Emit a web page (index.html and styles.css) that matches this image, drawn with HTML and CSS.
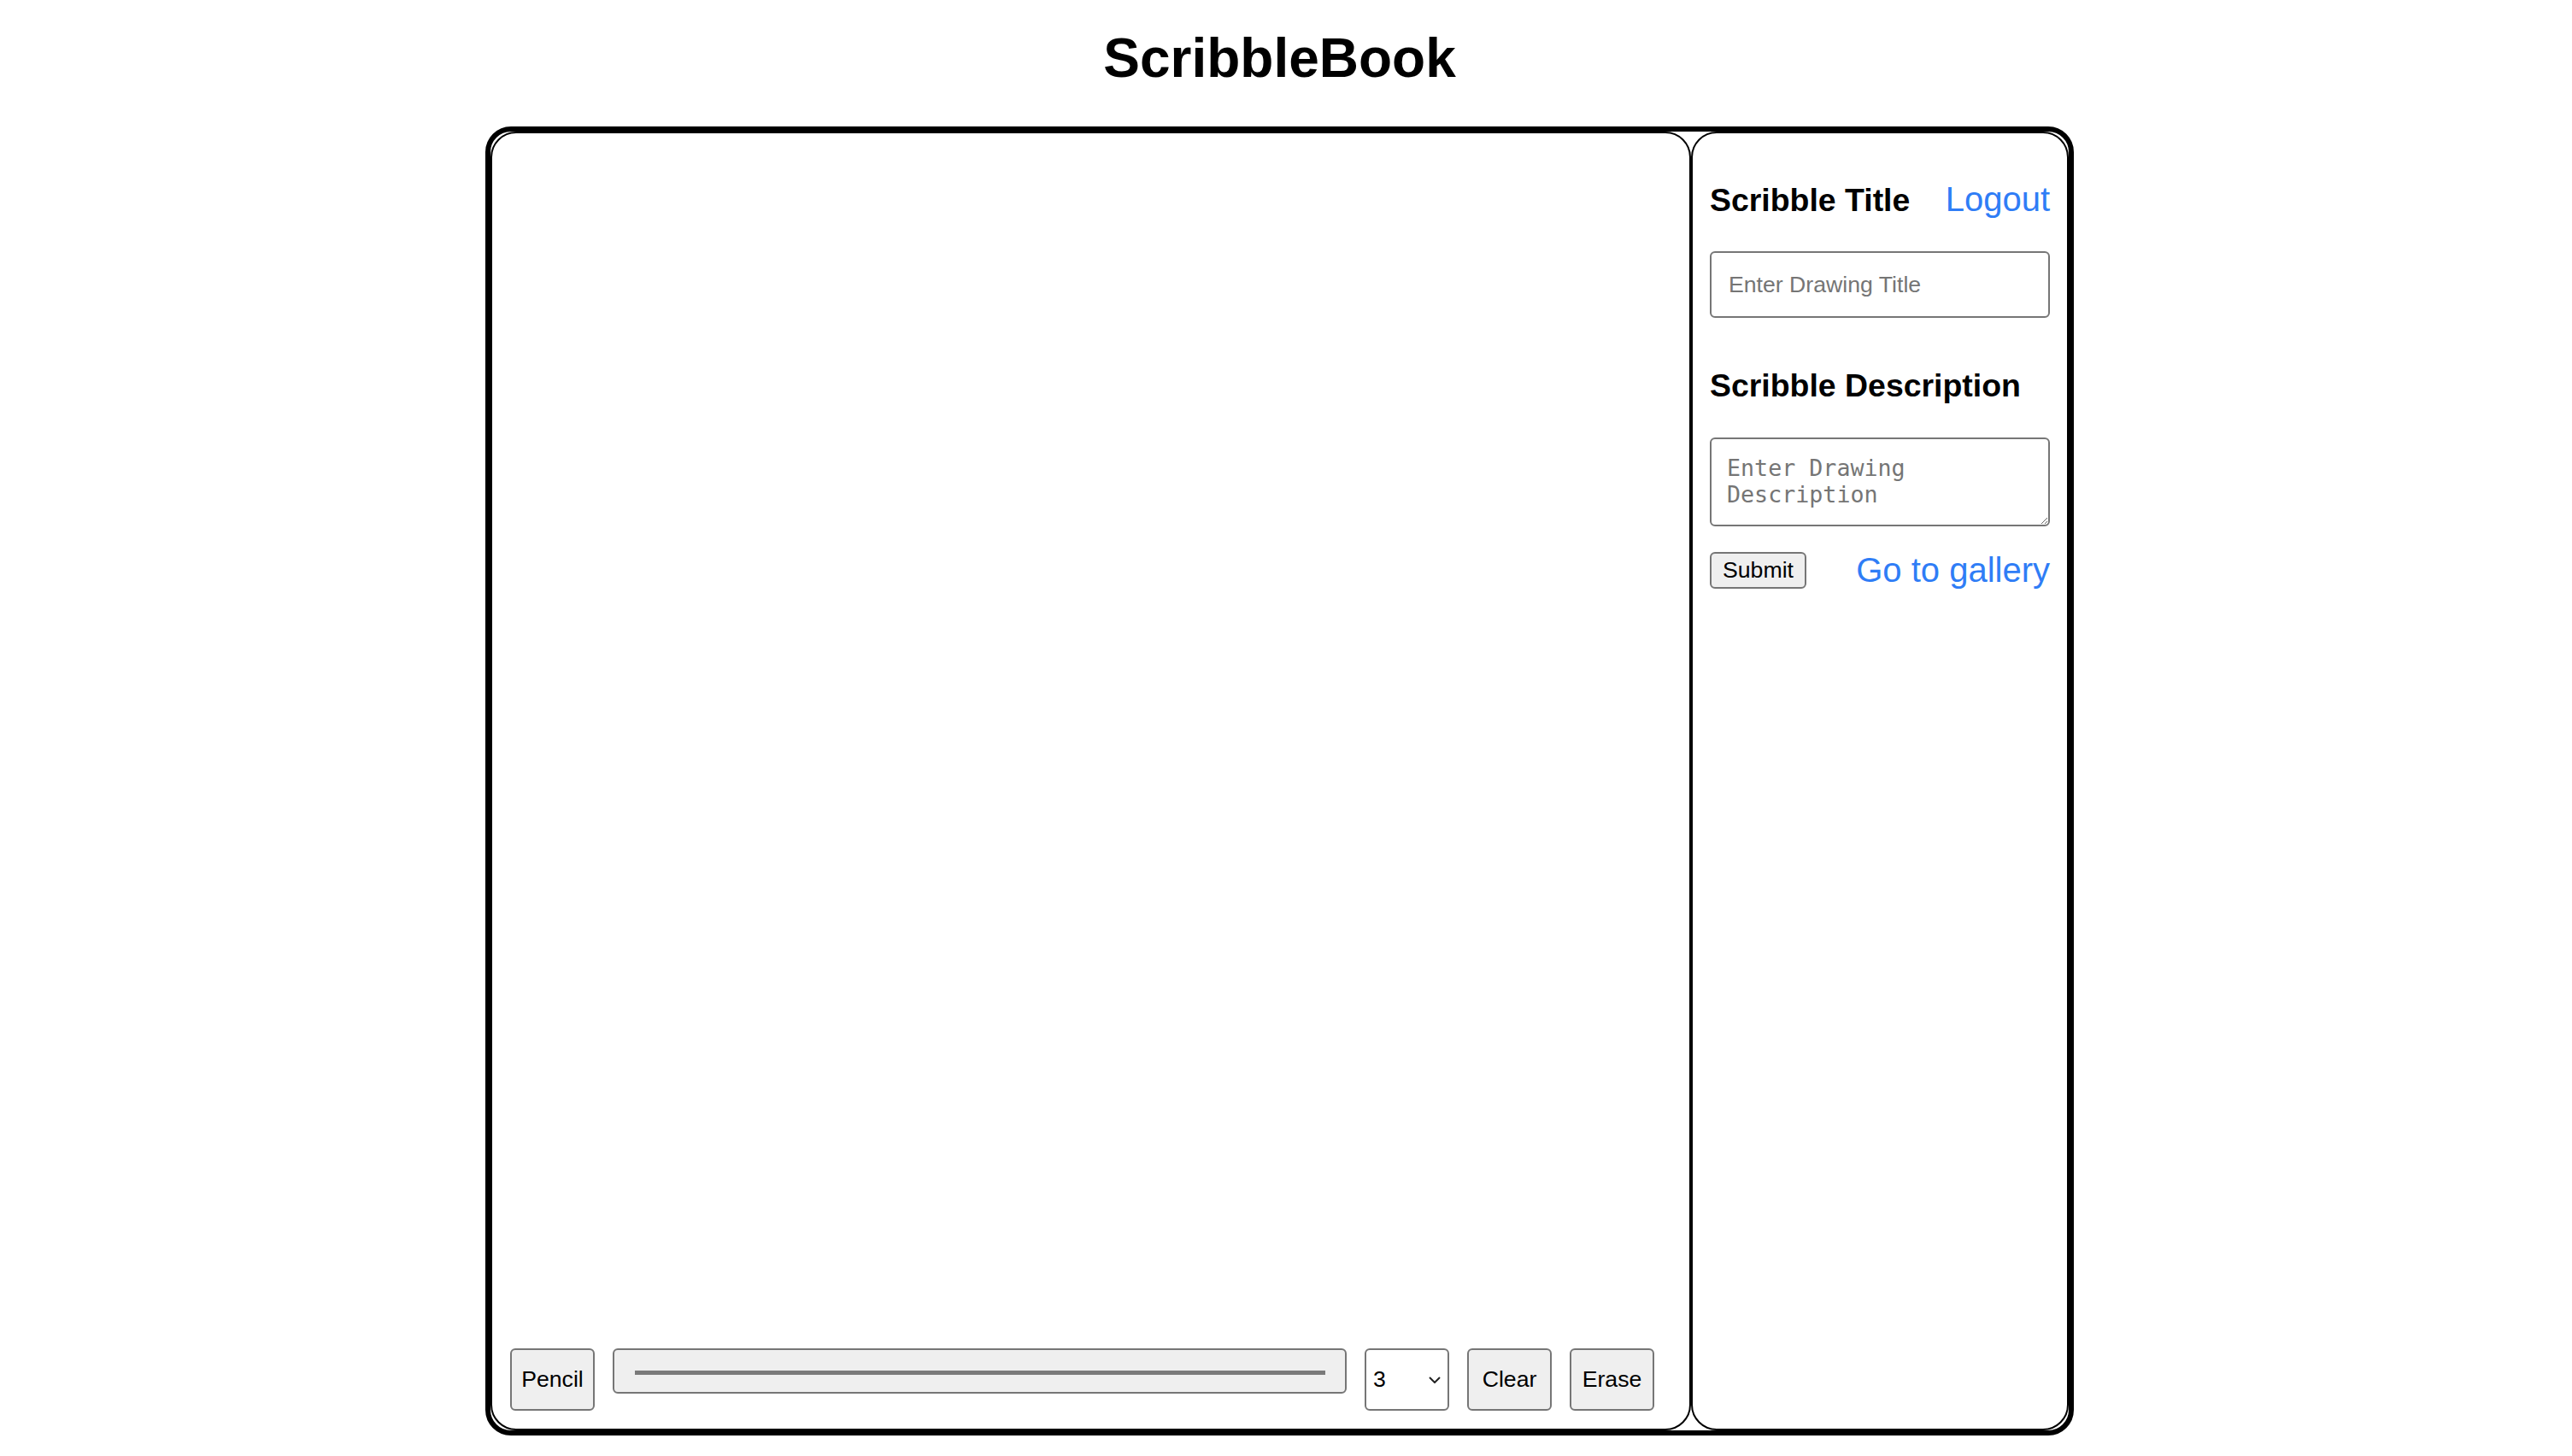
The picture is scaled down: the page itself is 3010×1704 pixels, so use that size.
FILE: index.html
```html
<!DOCTYPE html>
<html lang="en">
<head>
<meta charset="utf-8">
<title>ScribbleBook</title>
<link rel="stylesheet" href="styles.css">
</head>
<body>
<div class="page">
  <h1 class="app-title">ScribbleBook</h1>
  <div class="board">
    <div class="canvas-area">
      <div class="toolbar">
        <button class="btn">Pencil</button>
        <div class="slider"><div class="slider-track"></div></div>
        <div class="size-select">
          <span>3</span>
          <svg class="chevron" width="14" height="8" viewBox="0 0 14 8"><path d="M1 1 L7 7 L13 1" fill="none" stroke="#222" stroke-width="2"/></svg>
        </div>
        <button class="btn">Clear</button>
        <button class="btn">Erase</button>
      </div>
    </div>
    <div class="sidebar">
      <div class="field-head">
        <h3 class="field-label">Scribble Title</h3>
        <a class="link" href="#">Logout</a>
      </div>
      <input class="title-input" type="text" placeholder="Enter Drawing Title">
      <h3 class="field-label desc-label">Scribble Description</h3>
      <textarea class="desc-input" placeholder="Enter Drawing Description"></textarea>
      <div class="actions">
        <button class="submit-btn">Submit</button>
        <a class="link gallery-link" href="#">Go to gallery</a>
      </div>
    </div>
  </div>
</div>
</body>
</html>
```
FILE: styles.css
```css
* { box-sizing: border-box; }
html, body { margin: 0; background: #fff; }
body { font-family: "Liberation Sans", Arial, sans-serif; color: #000; }

.page {
  padding-right: 15px;
  display: flex;
  flex-direction: column;
  align-items: center;
}

.app-title {
  font-size: 64px;
  font-weight: 700;
  line-height: 74px;
  margin: 31px 0 43px;
}

.board {
  width: 1859px;
  height: 1532px;
  border: 6px solid #000;
  border-radius: 30px;
  display: flex;
}

.canvas-area {
  width: 1405px;
  border: 2px solid #000;
  border-radius: 30px;
  display: flex;
  flex-direction: column;
  justify-content: flex-end;
}

.toolbar {
  display: flex;
  align-items: flex-start;
  gap: 21px;
  padding: 0 41px 21px 21px;
}

.btn {
  width: 99px;
  height: 73px;
  font-family: "Liberation Sans", Arial, sans-serif;
  font-size: 26.67px;
  color: #000;
  background: #efefef;
  border: 2px solid #767676;
  border-radius: 6px;
  padding: 0;
  display: flex;
  align-items: center;
  justify-content: center;
}

.slider {
  flex: 1;
  height: 53px;
  background: #efefef;
  border: 2px solid #767676;
  border-radius: 6px;
  display: flex;
  align-items: center;
  padding: 0 23px 0 24px;
}

.slider-track {
  flex: 1;
  height: 5px;
  margin-top: 3px;
  background: #7a7a7a;
}

.size-select {
  width: 99px;
  height: 73px;
  background: #fff;
  border: 2px solid #767676;
  border-radius: 6px;
  display: flex;
  align-items: center;
  justify-content: space-between;
  padding: 0 8px 0 8px;
  font-size: 26.67px;
}

.chevron { display: block; }

.sidebar {
  width: 442px;
  border: 2px solid #000;
  border-radius: 30px;
  padding: 55px 20px 20px;
  display: flex;
  flex-direction: column;
}

.field-head {
  display: flex;
  justify-content: space-between;
  align-items: baseline;
}

.field-label {
  font-size: 37.44px;
  font-weight: 700;
  line-height: 44px;
  margin: 0;
}

.link {
  font-size: 40px;
  line-height: 44px;
  color: #2f7df6;
  text-decoration: none;
}

.title-input {
  margin-top: 38px;
  width: 100%;
  height: 78px;
  border: 2px solid #767676;
  border-radius: 6px;
  padding: 0 20px;
  font-family: "Liberation Sans", Arial, sans-serif;
  font-size: 26.67px;
  outline: none;
}

.title-input::placeholder { color: #757575; }

.desc-label { margin-top: 57px; }

.desc-input {
  margin-top: 39px;
  width: 100%;
  height: 104px;
  border: 2px solid #767676;
  border-radius: 6px;
  padding: 18px;
  font-family: "DejaVu Sans Mono", monospace;
  font-size: 26.67px;
  line-height: 31px;
  outline: none;
  display: block;
}

.desc-input::placeholder { color: #757575; }

.actions {
  margin-top: 26px;
  display: flex;
  justify-content: space-between;
  align-items: flex-start;
}

.gallery-link { margin-top: 3px; }

.submit-btn {
  margin-top: 4px;
  width: 113px;
  height: 43px;
  font-family: "Liberation Sans", Arial, sans-serif;
  font-size: 26.67px;
  color: #000;
  background: #efefef;
  border: 2px solid #767676;
  border-radius: 6px;
  padding: 0;
}
```
